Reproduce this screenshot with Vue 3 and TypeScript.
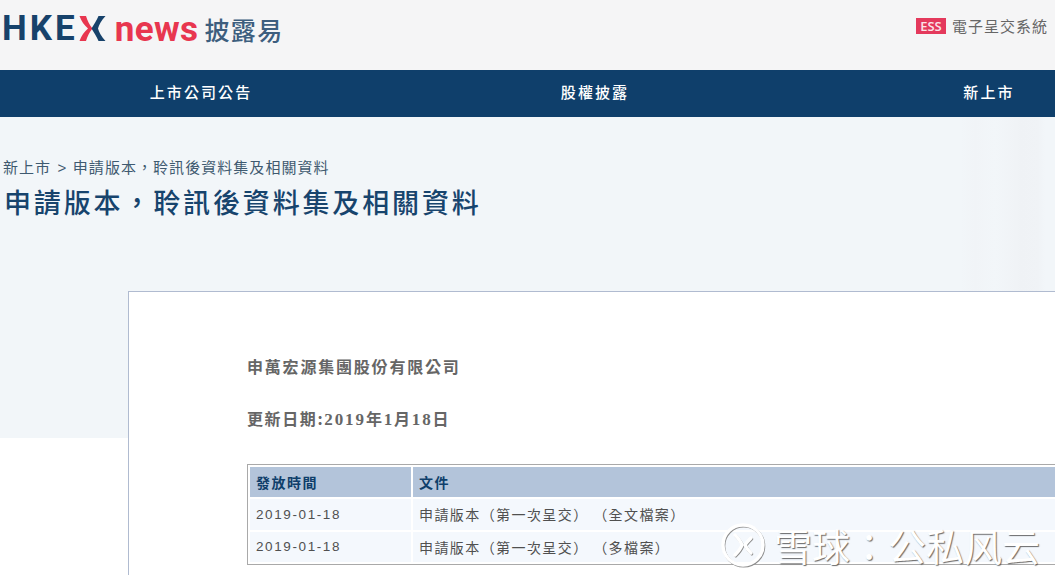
<script setup lang="ts">
const nav: string[] = ['上市公司公告', '股權披露', '新上市']
const rows: { date: string; title: string }[] = [
  { date: '2019-01-18', title: '申請版本\uFF08第一次呈交\uFF09 \uFF08全文檔案\uFF09' },
  { date: '2019-01-18', title: '申請版本\uFF08第一次呈交\uFF09 \uFF08多檔案\uFF09' },
]
</script>

<template>
  <div class="page">
    <header class="top">
      <div class="logo">
        <span class="hke">HKE</span>
        <svg class="x" width="27" height="27" viewBox="0 0 27 27" aria-hidden="true">
          <path d="M0.5 1H7C8.5 6 10.5 10 13.5 13.5C10.5 17 8.5 21 7 26H0.5C2.5 20.5 5 17 9 13.5C5 10 2.5 6.5 0.5 1Z" fill="#e8364f" />
          <path d="M26.5 1H19.5C17.5 6 14.5 10 12.5 13.5C14.5 17 17.5 21 19.5 26H26.5C22 21 20 17 19 13.5C20 10 22 6 26.5 1Z" fill="#17426b" />
        </svg>
        <span class="news">news</span>
        <span class="cn">披露易</span>
      </div>
      <div class="ess">
        <span class="badge">ESS</span>
        <span class="ess-text">電子呈交系統</span>
      </div>
    </header>

    <nav class="nav">
      <a v-for="item in nav" :key="item" class="nav-item">{{ item }}</a>
    </nav>

    <section class="hero">
      <div class="crumb">新上市 <span class="gt">&gt;</span> 申請版本&#xFF0C;聆訊後資料集及相關資料</div>
      <h1 class="title">申請版本&#xFF0C;聆訊後資料集及相關資料</h1>
    </section>

    <main class="card">
      <p class="company">申萬宏源集團股份有限公司</p>
      <p class="updated">更新日期:<span class="num">2019</span>年<span class="num">1</span>月<span class="num">18</span>日</p>
      <table class="docs">
        <thead>
          <tr>
            <th class="c1">發放時間</th>
            <th>文件</th>
          </tr>
        </thead>
        <tbody>
          <tr v-for="(r, i) in rows" :key="i">
            <td class="date">{{ r.date }}</td>
            <td>{{ r.title }}</td>
          </tr>
        </tbody>
      </table>
    </main>

    <div class="mark">
      <svg class="mark-logo" width="46" height="48" viewBox="0 0 46 48" aria-hidden="true">
        <g fill="none" stroke-linecap="round">
          <g stroke="#8c8c8c" stroke-width="3" transform="translate(0.8 1)">
            <circle cx="23" cy="24" r="20" />
            <path d="M15 14C19 18 21 21 22 24C21 27 19 30 15 34" />
            <path d="M31 17C28 20 26 22 25 24C26 26 28 29 31 32" />
          </g>
          <g stroke="#ffffff" stroke-width="3.4">
            <circle cx="23" cy="24" r="20" />
            <path d="M15 14C19 18 21 21 22 24C21 27 19 30 15 34" />
            <path d="M31 17C28 20 26 22 25 24C26 26 28 29 31 32" />
          </g>
        </g>
      </svg>
      <span class="mark-text">雪球<span class="colon">&#xFF1A;</span>公私风云</span>
    </div>
  </div>
</template>

<style scoped>
.page {
  position: relative;
  width: 1055px;
  height: 575px;
  overflow: hidden;
  background: #fff;
  font-family: "Noto Sans CJK TC", "Liberation Sans", sans-serif;
  text-spacing-trim: space-all;
}
.top {
  height: 70px;
  background: #f5f5f6;
  display: flex;
  justify-content: space-between;
  align-items: flex-start;
  padding: 0 7px 0 2px;
  box-sizing: border-box;
}
.logo {
  display: flex;
  align-items: flex-start;
  height: 70px;
}
.hke {
  font-family: Roboto, "Liberation Sans", sans-serif;
  font-weight: 700;
  font-size: 35px;
  line-height: 35px;
  letter-spacing: 3px;
  margin-top: 11px;
  color: #17426b;
}
.x {
  margin-top: 15px;
  margin-left: 1px;
}
.news {
  font-family: Roboto, "Liberation Sans", sans-serif;
  font-weight: 700;
  font-size: 35px;
  line-height: 35px;
  margin-top: 12px;
  margin-left: 9px;
  color: #e8364f;
  letter-spacing: 0.4px;
}
.cn {
  font-size: 25px;
  line-height: 30px;
  letter-spacing: 1.4px;
  font-weight: 500;
  color: #3d5e7e;
  margin-top: 14px;
  margin-left: 6px;
}
.ess {
  display: flex;
  align-items: center;
  gap: 6px;
  margin-top: 18px;
}
.badge {
  background: #e4395c;
  color: #fbe3e8;
  width: 30px;
  height: 16px;
  font-family: "Open Sans", "Liberation Sans", sans-serif;
  font-size: 13px;
  font-weight: 600;
  line-height: 16px;
  text-align: center;
}
.ess-text {
  font-size: 15px;
  line-height: 16px;
  letter-spacing: 1px;
  color: #666;
}
.nav {
  height: 47px;
  background: #0f3f6b;
  display: grid;
  grid-template-columns: repeat(3, 394px);
  padding-left: 4px;
  align-items: start;
  text-align: center;
}
.nav-item {
  color: #fff;
  font-size: 15px;
  font-weight: 500;
  letter-spacing: 2.1px;
  line-height: 44px;
}
.hero {
  height: 321px;
  box-sizing: border-box;
  padding: 37px 0 0 3px;
  background:
    linear-gradient(90deg, transparent 960px, #f1f4f7 975px, #f2f6f9 995px, #f0f3f6 1016px, #eff2f5 1022px, #f0f3f6 1038px, #f2f6f9 1045px),
    #f2f6f9;
}
.crumb {
  font-size: 15px;
  line-height: 26px;
  letter-spacing: 1.05px;
  color: #3f5a70;
}
.gt {
  font-family: "Liberation Sans", sans-serif;
  padding: 0 1px 0 2px;
}
.title {
  margin: 3px 0 0 1px;
  font-size: 27px;
  line-height: 36px;
  letter-spacing: 2.85px;
  font-weight: 500;
  color: #17446d;
}
.card {
  margin: -147px 0 0 128px;
  width: 1100px;
  height: 400px;
  box-sizing: border-box;
  background: #fff;
  border: 1px solid #b0bbd0;
  padding: 60px 0 0 118px;
  position: relative;
}
.company,
.updated {
  margin: 0;
  font-size: 16px;
  line-height: 28px;
  font-weight: 700;
  color: #666;
  letter-spacing: 1.8px;
}
.updated {
  margin-top: 24px;
  letter-spacing: 1.6px;
}
.num {
  font-family: "Liberation Serif", serif;
  font-size: 17px;
  letter-spacing: 1.95px;
}
.docs {
  margin-top: 30px;
  width: 900px;
  border: 1px solid #a9a9a9;
  border-collapse: separate;
  border-spacing: 2px;
  table-layout: fixed;
}
.docs th {
  background: #b3c4da;
  color: #0f3f6b;
  font-size: 14px;
  font-weight: 700;
  letter-spacing: 1.5px;
  text-align: left;
  height: 30px;
  padding: 0 0 0 6px;
}
.docs th.c1 {
  width: 155px;
}
.docs td {
  background: #f4f8fd;
  color: #505050;
  font-size: 14px;
  letter-spacing: 1.42px;
  height: 30.5px;
  padding: 0 0 0 6px;
}
.docs td.date {
  font-family: "Liberation Sans", sans-serif;
  font-size: 13.5px;
  letter-spacing: 1.6px;
}
.mark {
  position: absolute;
  left: 720px;
  top: 521px;
  display: flex;
  align-items: center;
  gap: 8px;
}
.mark-text {
  font-family: "Noto Sans CJK SC", sans-serif;
  font-size: 38px;
  line-height: 48px;
  font-weight: 400;
  color: #fff;
  text-shadow: 1px 1px 1px rgba(70, 70, 70, 0.8);
}
.colon {
  font-family: "Noto Sans CJK TC", sans-serif;
}
</style>
